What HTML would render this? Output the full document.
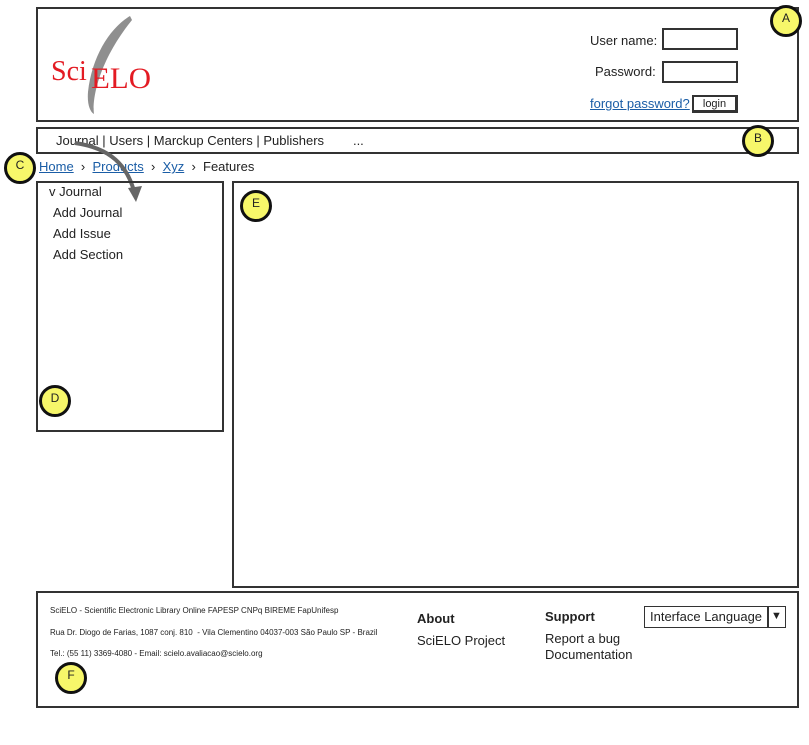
<!DOCTYPE html>
<html><head><meta charset="utf-8"><style>
body{margin:0;width:809px;height:745px;background:#fff;position:relative;overflow:hidden;font-family:"Liberation Sans",sans-serif;color:#222}
.b{position:absolute;border:2px solid #333;box-sizing:border-box}
.t{position:absolute;white-space:nowrap;font-size:13px}
a{color:#1a5da6;text-decoration:underline}
.c{position:absolute;width:32px;height:32px;border-radius:50%;background:#f7f76a;border:3px solid #111;box-sizing:border-box;font-size:12px;text-align:center;line-height:20px;color:#222}
.in{position:absolute;border:2px solid #333;width:76px;height:22px;box-sizing:border-box}
</style></head><body>
<div class="b" style="left:36px;top:7px;width:763px;height:115px"></div>
<svg style="position:absolute;left:48px;top:12px" width="110" height="105">
<path d="M82 4 C62 16 44 44 40 80 C39 92 42 100 46 102 C44 88 50 50 84 8 Z" fill="#444" opacity=".6"/>
<text x="3" y="68" font-family="Liberation Serif" font-size="28" fill="#e31b23">Sci</text>
<text x="43" y="76" font-family="Liberation Serif" font-size="30" fill="#e31b23" textLength="60" lengthAdjust="spacingAndGlyphs">ELO</text>
</svg>
<div class="t" style="left:590px;top:33px">User name:</div>
<div class="in" style="left:662px;top:28px"></div>
<div class="t" style="left:595px;top:64px">Password:</div>
<div class="in" style="left:662px;top:61px"></div>
<div class="t" style="left:590px;top:96px"><a>forgot password?</a></div>
<div class="b" style="left:692px;top:95px;width:46px;height:18px;border-width:2px 3px 3px 2px;font-size:11px;text-align:center;line-height:14px">login</div>
<div class="b" style="left:36px;top:127px;width:763px;height:27px"></div>
<div class="t" style="left:56px;top:133px">Journal | Users | Marckup Centers | Publishers &nbsp;&nbsp;&nbsp;&nbsp;&nbsp;&nbsp;&nbsp;...</div>
<div class="t" style="left:39px;top:159px"><a>Home</a> &nbsp;›&nbsp; <a>Products</a> &nbsp;›&nbsp; <a>Xyz</a> &nbsp;›&nbsp; Features</div>
<svg style="position:absolute;left:70px;top:140px" width="80" height="65"><path d="M5 3 C40 8 58 25 65 55" stroke="#666" stroke-width="4" fill="none"/><path d="M58 48 L66 62 L72 46" fill="#666"/></svg>
<div class="b" style="left:36px;top:181px;width:188px;height:251px"></div>
<div class="t" style="left:49px;top:184px">v Journal</div>
<div class="t" style="left:53px;top:205px">Add Journal</div>
<div class="t" style="left:53px;top:226px">Add Issue</div>
<div class="t" style="left:53px;top:247px">Add Section</div>
<div class="b" style="left:232px;top:181px;width:567px;height:407px"></div>
<div class="b" style="left:36px;top:591px;width:763px;height:117px"></div>
<div class="t" style="left:50px;top:606px;font-size:8px">SciELO - Scientific Electronic Library Online FAPESP CNPq BIREME FapUnifesp</div>
<div class="t" style="left:50px;top:628px;font-size:8px">Rua Dr. Diogo de Farias, 1087 conj. 810 &nbsp;- Vila Clementino 04037-003 São Paulo SP - Brazil</div>
<div class="t" style="left:50px;top:649px;font-size:8px">Tel.: (55 11) 3369-4080 - Email: scielo.avaliacao@scielo.org</div>
<div class="t" style="left:417px;top:611px;font-weight:bold">About</div>
<div class="t" style="left:417px;top:633px">SciELO Project</div>
<div class="t" style="left:545px;top:609px;font-weight:bold">Support</div>
<div class="t" style="left:545px;top:631px">Report a bug</div>
<div class="t" style="left:545px;top:647px">Documentation</div>
<div class="b" style="left:644px;top:606px;width:142px;height:22px;border-width:1.5px"></div>
<div class="t" style="left:650px;top:609px">Interface Language</div>
<div style="position:absolute;left:767px;top:606px;width:1.5px;height:22px;background:#333"></div>
<div class="t" style="left:771px;top:610px;font-size:11px">▼</div>
<div class="c" style="left:770px;top:5px">A</div>
<div class="c" style="left:742px;top:125px">B</div>
<div class="c" style="left:4px;top:152px">C</div>
<div class="c" style="left:39px;top:385px">D</div>
<div class="c" style="left:240px;top:190px">E</div>
<div class="c" style="left:55px;top:662px">F</div>
</body></html>
